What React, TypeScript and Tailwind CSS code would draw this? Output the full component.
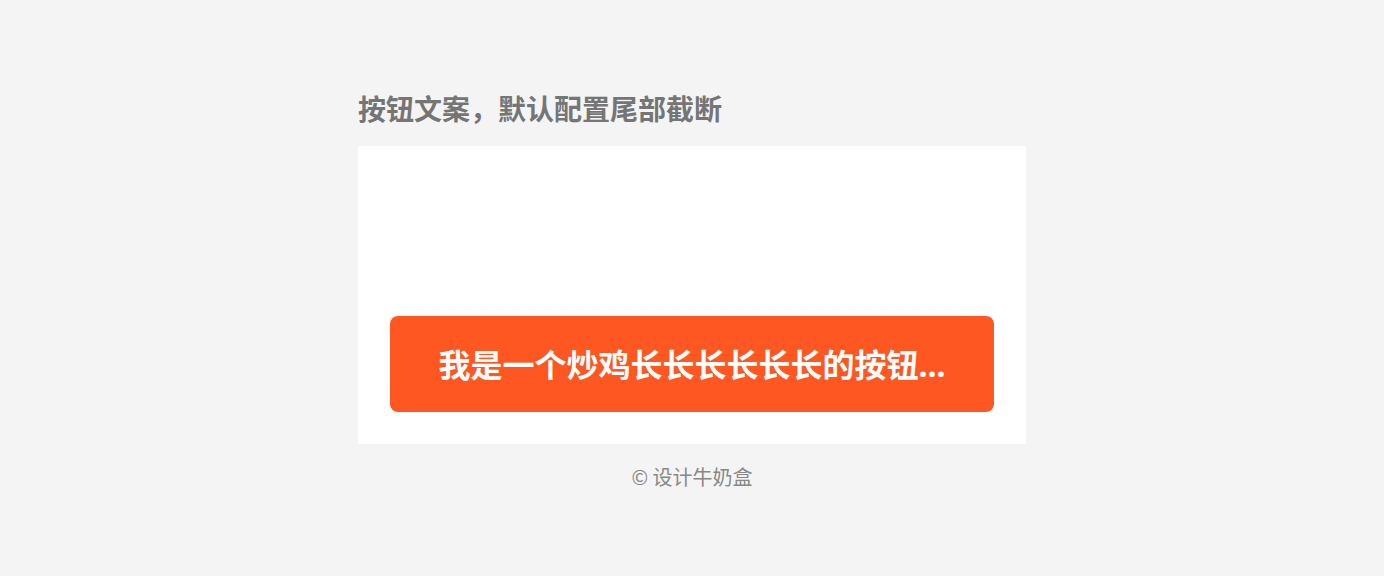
export default function App() {
  return (
    <div
      className="min-h-[576px] w-full bg-[#f4f4f4] pt-[88px]"
      style={{ fontFamily: '"Noto Sans CJK SC", "Noto Sans", sans-serif' }}
    >
      <div className="mx-auto w-[668px]">
        <h1 className="text-[28px] font-bold leading-[40px] text-[#757575]">
          按钮文案，默认配置尾部截断
        </h1>
        <div className="mt-[18px] flex h-[298px] flex-col justify-end bg-white px-8 pb-8">
          <button className="flex h-24 w-full items-center justify-center rounded-lg bg-[#ff5722] px-12 text-[32px] font-bold text-white">
            <span className="whitespace-nowrap">
              我是一个炒鸡长长长长长长的按钮
              <span style={{ fontFamily: '"Noto Sans", sans-serif' }}>...</span>
            </span>
          </button>
        </div>
        <p className="mt-[19px] text-center text-[20px] leading-[28px] text-[#888888]">© 设计牛奶盒</p>
      </div>
    </div>
  );
}
